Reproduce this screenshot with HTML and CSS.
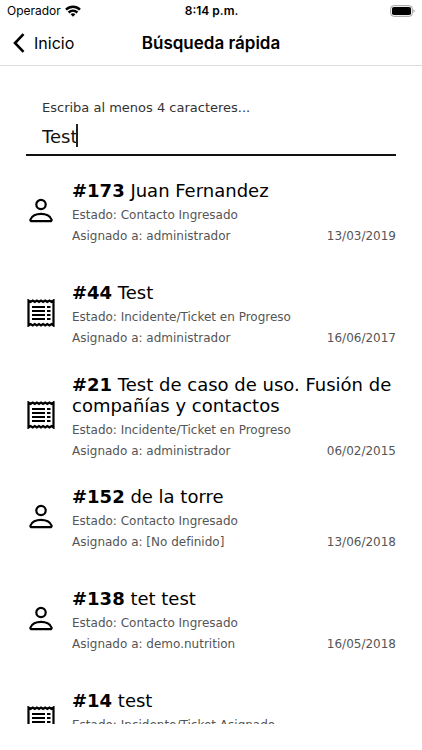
FILE: index.html
```html
<!DOCTYPE html>
<html lang="es">
<head>
<meta charset="utf-8">
<meta name="viewport" content="width=device-width, initial-scale=1">
<title>Búsqueda rápida</title>
<link rel="stylesheet" href="styles.css">
</head>
<body>
<svg class="sprite" aria-hidden="true">
  <symbol id="person" viewBox="0 0 28 28">
    <g fill="none" stroke="#000" stroke-width="2.200">
      <circle cx="14" cy="7.500" r="4.700"/>
      <path d="M5 24.200H23C24.300 24.200 24.900 23.500 24.500 22.500C23.300 19 18.800 16.800 14 16.800S4.700 19 3.500 22.500C3.100 23.500 3.700 24.200 5 24.200Z"/>
    </g>
  </symbol>
  <symbol id="ticket" viewBox="0 0 28 28">
    <path fill="none" stroke="#000" stroke-width="2.200" d="M1.500 1.500V26.500L3.600 25L5.700 26.500L7.800 25L9.900 26.500L12 25L14 26.500L16.100 25L18.200 26.500L20.300 25L22.400 26.500L24.500 25L26.500 26.500V1.500L24.500 3L22.400 1.500L20.300 3L18.200 1.500L16.100 3L14 1.500L12 3L9.900 1.500L7.800 3L5.700 1.500L3.600 3Z"/>
    <path stroke="#000" stroke-width="2" d="M5 8H18M5 12H18M5 16H18M5 20H18M20 8H23.500M20 12H23.500M20 16H23.500M20 20H23.500"/>
  </symbol>
</svg>
<div class="app">
  <div class="status">
    <div class="carrier">Operador
      <svg class="wifi" viewBox="0 0 16 12" aria-hidden="true"><g fill="none" stroke="#000" stroke-width="2.400"><path d="M1 4.700C5 .8 11 .8 15 4.700"/><path d="M3.600 7.500C6.200 5.100 9.800 5.100 12.400 7.500"/></g><path d="M5.600 9.200C7 8 9 8 10.400 9.200L8 11.700Z"/></svg>
    </div>
    <div class="time">8:14 p.m.</div>
    <svg class="battery" viewBox="0 0 26 12" aria-hidden="true"><rect x=".7" y=".7" width="21.600" height="10.600" rx="3" fill="#fff" stroke="#999"/><rect x="2" y="2" width="19" height="8" rx="1.800"/><path d="M23.500 4.200C25 4.800 25 7.200 23.500 7.800Z" fill="#999"/></svg>
  </div>
  <header class="nav">
    <a class="back" href="#"><svg class="chevron" viewBox="0 0 12 20" aria-hidden="true"><path d="M10.500 1.200L2 10L10.500 18.800" fill="none" stroke="#000" stroke-width="2.600"/></svg>Inicio</a>
    <h1>Búsqueda rápida</h1>
  </header>
  <main class="content">
    <div class="search">
      <label for="query">Escriba al menos 4 caracteres...</label>
      <div class="entry"><input id="query" type="text" value="Test"><span class="caret"></span></div>
    </div>
    <ul class="results">
      <li><svg class="icon"><use href="#person"/></svg><div class="info"><h2><b>#173</b> Juan Fernandez</h2><p>Estado: Contacto Ingresado</p><p class="assigned"><span>Asignado a: administrador</span><time>13/03/2019</time></p></div></li>
      <li><svg class="icon"><use href="#ticket"/></svg><div class="info"><h2><b>#44</b> Test</h2><p>Estado: Incidente/Ticket en Progreso</p><p class="assigned"><span>Asignado a: administrador</span><time>16/06/2017</time></p></div></li>
      <li><svg class="icon"><use href="#ticket"/></svg><div class="info"><h2><b>#21</b> Test de caso de uso. Fusión de compañías y contactos</h2><p>Estado: Incidente/Ticket en Progreso</p><p class="assigned"><span>Asignado a: administrador</span><time>06/02/2015</time></p></div></li>
      <li><svg class="icon"><use href="#person"/></svg><div class="info"><h2><b>#152</b> de la torre</h2><p>Estado: Contacto Ingresado</p><p class="assigned"><span>Asignado a: [No definido]</span><time>13/06/2018</time></p></div></li>
      <li><svg class="icon"><use href="#person"/></svg><div class="info"><h2><b>#138</b> tet test</h2><p>Estado: Contacto Ingresado</p><p class="assigned"><span>Asignado a: demo.nutrition</span><time>16/05/2018</time></p></div></li>
      <li><svg class="icon"><use href="#ticket"/></svg><div class="info"><h2><b>#14</b> test</h2><p>Estado: Incidente/Ticket Asignado</p></div></li>
    </ul>
  </main>
</div>
</body>
</html>
```
FILE: styles.css
```css
* { box-sizing: border-box; }
body { margin: 0; background: #fff; color: #000; font-family: "DejaVu Sans", Verdana, sans-serif; }
h1, h2, p, ul { margin: 0; padding: 0; }
.sprite { display: none; }
.app { display: flex; flex-direction: column; height: 100vh; padding-bottom: 26px; }

.status, .nav { display: grid; grid-template-columns: 1fr auto 1fr; align-items: center; font-family: Inter, sans-serif; }
.status { height: 21px; padding: 0 6px 0 7px; font-size: 12px; }
.carrier { display: flex; align-items: center; gap: 4px; }
.wifi { width: 16px; height: 12px; }
.time { font-weight: 600; }
.battery { justify-self: end; width: 26px; height: 12px; }
.nav { flex: none; height: 45px; padding: 0 13px; border-bottom: 1px solid #ddd; }
.back { display: flex; align-items: center; gap: 9px; color: #000; text-decoration: none; font-size: 16px; }
.chevron { width: 12px; height: 20px; }
.nav h1 { font-size: 17px; font-weight: 600; }

.content { flex: 1; min-height: 0; overflow: hidden; padding: 32px 26px 0; }
.search { padding: 0 16px; border-bottom: 2px solid #111; }
.search label { display: block; font-size: 13px; line-height: 20px; color: #333; }
.entry { display: flex; position: relative; height: 36px; padding-top: 6px; }
.entry input { width: 100%; height: 24px; padding: 0; border: 0; outline: 0; background: none; font: inherit; font-size: 18px; color: #111; }
.caret { position: absolute; left: 34px; top: 6px; width: 2px; height: 23px; background: #222; }

.results { list-style: none; padding-top: 6px; }
.results li { display: flex; align-items: center; gap: 17px; height: 102px; }
.results li:last-child { align-items: flex-start; padding-top: 17px; }
.results li:last-child .icon { margin-top: 17px; }
.icon { flex: none; width: 28px; height: 28px; margin: 0 0 4px 1px; }
.info { flex: 1; min-width: 0; padding-top: 1px; }
.info h2 { margin-bottom: 4px; font-size: 18px; font-weight: 400; line-height: 21px; }
.info p { font-size: 12px; line-height: 21px; color: #555; }
.assigned { display: flex; justify-content: space-between; }
```
